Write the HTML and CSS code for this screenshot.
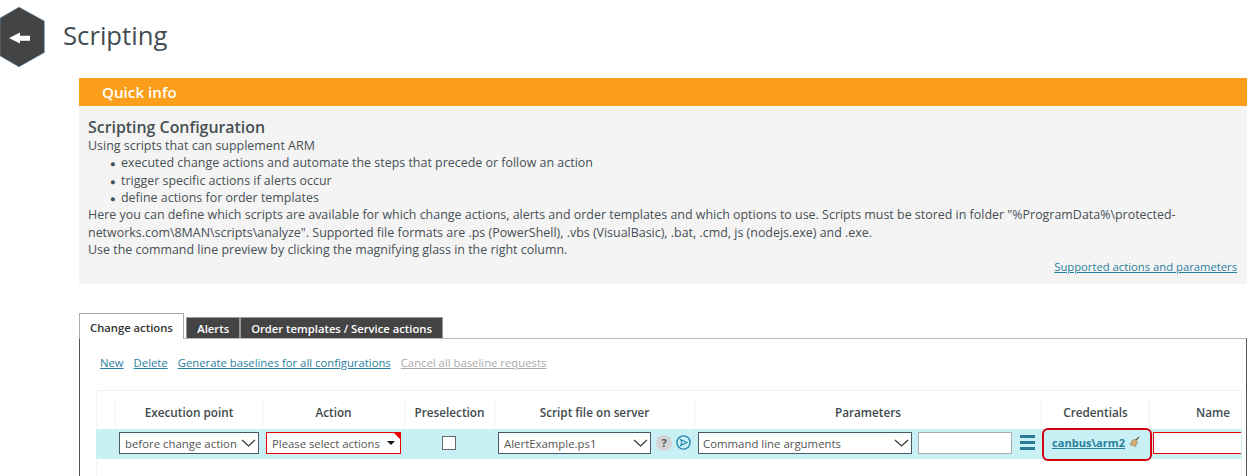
FILE: index.html
```html
<!DOCTYPE html>
<html lang="en">
<head>
<meta charset="utf-8">
<title>Scripting</title>
<link rel="stylesheet" href="styles.css">
</head>
<body>
<header class="head">
  <svg class="hex" width="46" height="60" viewBox="0 0 46 60" aria-hidden="true">
    <polygon points="19,0 44.500,14 44.500,45.500 19,60 0,49 0,11" fill="#444" stroke="#7fb2dc" stroke-width=".5"/>
    <polygon points="9,31 20,25.500 20,28.800 30,28.800 30,33.800 20,33.800 20,36.500" fill="#fff"/>
  </svg>
  <h1 class="title">Scripting</h1>
</header>
<main class="content">
  <section class="info">
    <h2 class="info-head">Quick info</h2>
    <div class="info-body">
      <h3 class="info-title">Scripting Configuration</h3>
      <p>Using scripts that can supplement ARM</p>
      <ul class="bullets">
        <li>executed change actions and automate the steps that precede or follow an action</li>
        <li>trigger specific actions if alerts occur</li>
        <li>define actions for order templates</li>
      </ul>
      <p>Here you can define which scripts are available for which change actions, alerts and order templates and which options to use. Scripts must be stored in folder "%ProgramData%\protected-networks.com\8MAN\scripts\analyze". Supported file formats are .ps (PowerShell), .vbs (VisualBasic), .bat, .cmd, js (nodejs.exe) and .exe.</p>
      <p>Use the command line preview by clicking the magnifying glass in the right column.</p>
      <div class="info-link"><a href="#">Supported actions and parameters</a></div>
    </div>
  </section>
  <nav class="tabs">
    <a class="tab active" href="#">Change actions</a>
    <a class="tab" href="#">Alerts</a>
    <a class="tab" href="#">Order templates / Service actions</a>
  </nav>
  <section class="panel">
    <div class="actions">
      <a href="#">New</a>
      <a href="#">Delete</a>
      <a href="#">Generate baselines for all configurations</a>
      <span class="disabled">Cancel all baseline requests</span>
    </div>
    <div class="grid">
      <div class="row headrow">
        <div class="c c0"></div>
        <div class="c c1">Execution point</div>
        <div class="c c2">Action</div>
        <div class="c c3">Preselection</div>
        <div class="c c4">Script file on server</div>
        <div class="c c5">Parameters</div>
        <div class="c c6">Credentials</div>
        <div class="c c7">Name</div>
      </div>
      <div class="row datarow">
        <div class="d c0"></div>
        <div class="d c1"><div class="sel w1"><span>before change action</span><svg class="chev" width="15" height="8" viewBox="0 0 15 8"><path d="M1 1l6.500 6 6.500-6" fill="none" stroke="#333" stroke-width="1.200"/></svg></div></div>
        <div class="d c2"><div class="multi"><span>Please select actions</span><i class="caret"></i><i class="corner"></i></div></div>
        <div class="d c3"><span class="check"></span></div>
        <div class="d c4">
          <div class="sel w4"><span>AlertExample.ps1</span><svg class="chev" width="15" height="8" viewBox="0 0 15 8"><path d="M1 1l6.500 6 6.500-6" fill="none" stroke="#333" stroke-width="1.200"/></svg></div>
          <span class="help">?</span>
          <svg class="play" width="15" height="15" viewBox="0 0 15 15"><circle cx="7.500" cy="7.500" r="6.600" fill="none" stroke="#2a86b0" stroke-width="1.400"/><path d="M4.500 4.500L11 7.500 4.500 10.500l1.500-3z" fill="none" stroke="#2a86b0" stroke-width="1.100"/></svg>
        </div>
        <div class="d c5">
          <div class="sel w5"><span>Command line arguments</span><svg class="chev" width="15" height="8" viewBox="0 0 15 8"><path d="M1 1l6.500 6 6.500-6" fill="none" stroke="#333" stroke-width="1.200"/></svg></div>
          <span class="box"></span>
          <span class="burger"><i></i><i></i><i></i></span>
        </div>
        <div class="d c6">
          <a class="cred" href="#">canbus\arm2</a>
          <svg class="broom" width="11" height="12" viewBox="0 0 11 12"><path d="M6.500 4.500L10 1" stroke="#6b5a3e" stroke-width="1.300"/><path d="M5.500 3L8.500 6 6.500 10.500 1 8.500 3 5z" fill="#d2ad72" stroke="#85755b" stroke-width=".6"/></svg>
          <span class="ring"></span>
        </div>
        <div class="d c7"><span class="namebox"></span></div>
      </div>
    </div>
  </section>
</main>
</body>
</html>
```
FILE: styles.css
```css
* { box-sizing: border-box; }
html, body { margin: 0; height: 476px; overflow: hidden; background: #fff; }
body { font-family: "Open Sans", "Liberation Sans", sans-serif; font-size: 12.450px; color: #475055; }
a { color: #2a7f9e; }
.head { display: flex; align-items: flex-start; height: 78px; padding-top: 7px; }
.hex { flex: none; display: block; overflow: visible; }
.title { margin: 10px 0 0 17px; font-size: 25.700px; line-height: 38px; font-weight: 400; color: #444c50; }
.content { margin-left: 79px; }
.info-head { margin: 0; height: 28px; padding-left: 23px; background: #fb9e1b; color: #fff; font-size: 15.200px; font-weight: 600; line-height: 29px; }
.info-body { height: 178px; padding: 12px 10px 0 9px; background: #f4f4f4; line-height: 17.330px; }
.info-title { margin: 0 0 1px; font-size: 15.900px; line-height: 18px; font-weight: 600; }
.info-body p { margin: 0; }
.bullets { margin: 0; padding: 0 0 0 22px; list-style: none; }
.bullets li::before { content: "\25CF"; display: inline-block; width: 11px; font-size: 9.500px; line-height: 0; }
.info-link { margin-top: 0; text-align: right; font-size: 11.250px; line-height: 18px; }
.tabs { display: flex; margin-top: 29px; height: 25px; align-items: flex-end; }
.tab { display: block; height: 21px; margin-right: 0; padding: 0 10px; background: #444; color: #fff; font-size: 11.250px; font-weight: 600; line-height: 21px; text-decoration: none; border: 1px solid #999; border-bottom: 0; }
.tab.active { height: 26px; margin-right: 2px; margin-bottom: -1px; padding-right: 10.500px; background: #fff; color: #333; border-color: #aaa; position: relative; z-index: 1; line-height: 27px; }
.panel { border: 1px solid #555; border-top-color: #bbb; height: 140px; padding: 15px 0 0 16px; width: 1168px; overflow: hidden; }
.actions { display: flex; gap: 10px; font-size: 11.300px; line-height: 17px; margin-left: 4px; }
.disabled { color: #aaa; text-decoration: underline; }
.grid { margin-top: 19px; width: 1146px; height: 100px; box-shadow: inset 1px 0 #f2f2f2, inset -1px 0 #f2f2f2; }
.row { display: flex; }
.headrow { height: 39px; border-top: 1px solid #f2f2f2; }
.c { display: flex; flex: none; align-items: center; justify-content: center; margin-top: 6px; height: 32px; padding-bottom: 2px; font-size: 11.750px; font-weight: 600; color: #40494d; border-right: 1px solid #f2f2f2; }
.c0 { width: 20px; }
.c1 { width: 147px; }
.c2 { width: 142px; }
.c3 { width: 90px; }
.c4 { width: 200px; }
.c5 { width: 347px; }
.c6 { width: 108px; }
.c7 { width: 92px; }
.c.c7 { width: 126px; border-right: 0; }
.datarow { height: 30px; background: #c9f1f5; }
.d { display: flex; align-items: flex-start; padding-top: 3px; position: relative; }
.sel { display: flex; align-items: center; justify-content: space-between; height: 22px; background: #fff; border: 1px solid #455a64; font-size: 11.400px; color: #555; padding: 0 2px 0 5px; }
.w1 { width: 140px; margin-left: 3px; white-space: nowrap; }
.w4 { width: 153px; margin-left: 3px; }
.w5 { width: 214px; margin-left: 3px; padding-left: 4px; }
.chev { flex: none; }
.multi { position: relative; display: flex; align-items: center; width: 135px; height: 22px; margin-left: 3px; background: #fff; border: 1px solid #e60000; font-size: 11.300px; color: #555; padding-left: 5px; white-space: nowrap; }
.caret { position: absolute; right: 5px; top: 8px; border: 4px solid transparent; border-top: 4px solid #111; border-bottom: 0; }
.corner { position: absolute; right: 0; top: 0; border-top: 6px solid #e60000; border-left: 6px solid transparent; }
.check { width: 14px; height: 14px; margin: 4px 0 0 37px; background: #fff; border: 1px solid #666; }
.help { width: 16px; height: 16px; margin: 3px 0 0 5px; border-radius: 50%; background: #d4d4d4; text-align: center; font-size: 11px; font-weight: 700; line-height: 16px; color: #555; }
.play { margin: 3px 0 0 4px; }
.box { width: 94px; height: 22px; margin-left: 6px; background: #fff; border: 1px solid #aaa; }
.burger { display: flex; flex-direction: column; gap: 3px; width: 15px; margin: 3px 0 0 8px; }
.burger i { display: block; height: 3px; background: #2a7a96; }
.cred { margin: 3px 0 0 10px; font-size: 11.100px; font-weight: 700; }
.broom { margin: 4px 0 0 4px; }
.ring { position: absolute; left: 0; top: -1px; width: 110px; height: 33px; border: 2px solid #d9000d; border-radius: 6px; }
.namebox { display: block; width: 88px; height: 22px; margin-left: 3px; background: #fff; border: 1px solid #e60000; border-right: 0; }
```
